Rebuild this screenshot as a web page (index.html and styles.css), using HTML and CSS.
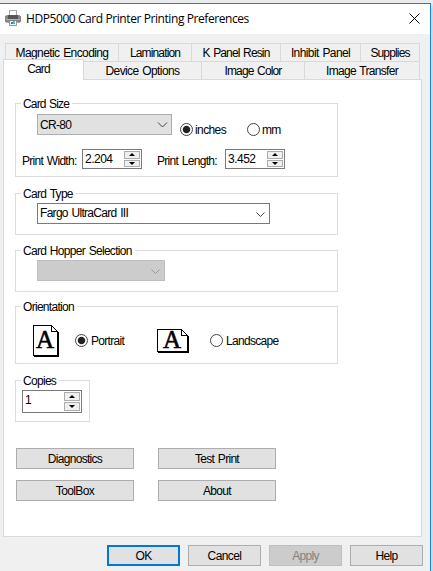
FILE: index.html
```
<!DOCTYPE html>
<html lang="en">
<head>
<meta charset="utf-8">
<title>HDP5000 Card Printer Printing Preferences</title>
<link rel="stylesheet" href="styles.css">
</head>
<body>
<div class="window">
  <header class="titlebar">
    <svg class="printer" width="16" height="16" viewBox="0 0 16 16" shape-rendering="crispEdges">
      <path d="M4.5 6V.5h7V6" fill="#fff" stroke="#a8a8a8"/>
      <path d="M1 5h3v1H1zM12 5h3v1h-3z" fill="#999"/>
      <path d="M0 6h16v6H0z" fill="#858585"/>
      <path d="M3 5h10v4H3z" fill="#555"/>
      <path d="M1 9h14v1H1z" fill="#b5b5b5"/>
      <path d="M1 12h14v1H1z" fill="#aaa"/>
      <path d="M4 11h8v5H4z" fill="#999"/>
      <path d="M5 11h6v4H5z" fill="#eef5fa"/>
      <path d="M6 12h2v2H6z" fill="#2d84b5"/>
      <path d="M8 11h2v3H8z" fill="#59b0d8"/>
    </svg>
    <h1 class="title">HDP5000 Card Printer Printing Preferences</h1>
    <svg class="close" width="11" height="11" viewBox="0 0 11 11"><path d="M.5.5l10 10M10.5.5l-10 10" stroke="#000" fill="none"/></svg>
  </header>

  <nav class="tabs tabs-back">
    <span class="tab w114 loose">Magnetic Encoding</span><span class="tab w74 tight">Lamination</span><span class="tab w90 tight">K Panel Resin</span><span class="tab w81 loose">Inhibit Panel</span><span class="tab w60 tight">Supplies</span>
  </nav>
  <nav class="tabs tabs-front">
    <span class="tab active tight">Card</span><span class="tab w119 loose">Device Options</span><span class="tab w104 tight">Image Color</span><span class="tab w116">Image Transfer</span>
  </nav>

  <main class="page">
    <section class="group size">
      <h2 class="legend tight">Card Size</h2>
      <div class="row size-row">
        <div class="combo gray"><span>CR-80</span><svg class="chev" width="11" height="6" viewBox="0 0 11 6"><path d="M1 .5l4.5 4.5L10 .5"/></svg></div>
        <i class="radio on"></i><span class="rl inches loose">inches</span>
        <i class="radio"></i><span class="rl mm">mm</span>
      </div>
      <div class="row print-row">
        <span class="pw">Print Width:</span>
        <div class="spin"><span>2.204</span><div class="arrows"><b class="up"></b><b class="down"></b></div></div>
        <span class="pl">Print Length:</span>
        <div class="spin"><span>3.452</span><div class="arrows"><b class="up"></b><b class="down"></b></div></div>
      </div>
    </section>

    <section class="group type">
      <h2 class="legend">Card Type</h2>
      <div class="combo white"><span>Fargo UltraCard III</span><svg class="chev" width="9" height="5" viewBox="0 0 9 5"><path d="M.5.5l4 4 4-4"/></svg></div>
    </section>

    <section class="group hopper">
      <h2 class="legend">Card Hopper Selection</h2>
      <div class="combo disabled"><span></span><svg class="chev" width="9" height="5" viewBox="0 0 9 5"><path d="M.5.5l4 4 4-4"/></svg></div>
    </section>

    <section class="group orient">
      <h2 class="legend">Orientation</h2>
      <div class="row orient-row">
        <div class="sheet portrait">
          <svg width="26" height="32" viewBox="0 0 26 32" shape-rendering="crispEdges"><path d="M.5.5h18l6 6v24H.5z" fill="#fff" stroke="#000"/><path d="M18.5.5v6h6" fill="none" stroke="#000"/><path d="M1 30h24V7h1v25H1z"/></svg>
          <span class="letter">A</span>
        </div>
        <i class="radio on"></i><span class="rl por">Portrait</span>
        <div class="sheet landscape">
          <svg width="32" height="24" viewBox="0 0 32 24" shape-rendering="crispEdges"><path d="M.5.5h24l6 6v16H.5z" fill="#fff" stroke="#000"/><path d="M24.5.5v6h6" fill="none" stroke="#000"/><path d="M1 22h29V7h2v17H1z"/></svg>
          <span class="letter">A</span>
        </div>
        <i class="radio"></i><span class="rl lan">Landscape</span>
      </div>
    </section>

    <section class="group copies">
      <h2 class="legend">Copies</h2>
      <div class="spin big"><span>1</span><div class="arrows"><b class="up"></b><b class="down"></b></div></div>
    </section>

    <div class="tools">
      <button class="btn">Diagnostics</button><button class="btn">Test Print</button>
      <button class="btn loose">ToolBox</button><button class="btn">About</button>
    </div>
  </main>

  <footer class="actions">
    <button class="btn default">OK</button><button class="btn loose">Cancel</button><button class="btn" disabled>Apply</button><button class="btn">Help</button>
  </footer>
</div>
</body>
</html>
```
FILE: styles.css
```
* { box-sizing: border-box; }
body {
  margin: 0;
  width: 433px;
  height: 571px;
  padding-top: 3px;
  overflow: hidden;
  background: linear-gradient(#ebebeb 3px, #d6d6d6 8px);
  font: 12px/14px "Liberation Sans", Arial, sans-serif;
  letter-spacing: -0.7px;
  word-spacing: 1px;
  color: #000;
  white-space: nowrap;
}
.window {
  width: 431px;
  height: 568px;
  border-top: 1px solid #1883d7;
  border-right: 1px solid #1883d7;
  background: #f0f0f0;
}
.titlebar {
  display: flex;
  height: 30px;
  padding: 6px 10px 0 5px;
  background: #fff;
}
.title {
  margin: 0 auto 0 5px;
  font: 12px/18px "Open Sans", "Noto Sans", sans-serif;
  letter-spacing: -0.42px;
  word-spacing: 0;
}
.close { margin-top: 3px; }
.tabs { display: flex; }
.tabs-back { margin: 9px 0 0 5px; height: 18px; }
.tabs-front { margin: 0 0 0 3px; height: 18px; }
.tab {
  flex: none;
  height: 19px;
  margin-right: -1px;
  padding-top: 2px;
  border: 1px solid #d9d9d9;
  text-align: center;
}
.w114 { width: 114px; }
.w74 { width: 74px; }
.w90 { width: 90px; }
.w81 { width: 81px; }
.w60 { width: 60px; }
.w119 { width: 119px; }
.w104 { width: 104px; }
.w116 { width: 116px; }
.tab.active {
  position: relative;
  z-index: 1;
  width: 81px;
  height: 21px;
  margin-top: -2px;
  padding: 2px 10px 0 0;
  border-bottom: 0;
  background: #fff;
}
.page {
  width: 419px;
  height: 458px;
  margin-left: 3px;
  padding: 23px 0 0 11px;
  border: 1px solid #d9d9d9;
  background: #fff;
}
.group {
  width: 323px;
  border: 1px solid #dcdcdc;
}
.legend {
  width: max-content;
  margin: -7px 0 0 5px;
  padding: 0 3px 0 2px;
  background: #fff;
  font: inherit;
}
.row { display: flex; }
.size { height: 74px; }
.type { height: 42px; margin-top: 16px; }
.hopper { height: 42px; margin-top: 15px; }
.orient { height: 58px; margin-top: 14px; }
.copies { width: 75px; height: 42px; margin-top: 16px; }
.combo {
  display: flex;
  height: 21px;
  margin-left: 21px;
  padding: 2px 3px 0 2px;
  border: 1px solid #adadad;
}
.chev { margin: 6px 1px 0 auto; fill: none; stroke: #444; }
.gray { width: 135px; padding-top: 3px; background: #e1e1e1; }
.gray .chev { margin: 4px 0 0 auto; }
.white { width: 233px; margin-top: 2px; border-color: #7a7a7a; }
.disabled { width: 128px; margin-top: 2px; background: #ccc; border-color: #bfbfbf; }
.disabled .chev { margin-top: 6px; stroke: #999; }
.size-row { margin-top: 3px; }
.radio {
  flex: none;
  width: 13px;
  height: 13px;
  border: 1px solid #444;
  border-radius: 50%;
  background: #fff;
}
.radio.on { background: radial-gradient(circle, #222 3.2px, #fff 4.2px); }
.size-row .radio { margin: 9px 2px 0 8px; }
.rl { margin-top: 9px; }
.inches { width: 44px; }
.print-row { margin: 12px 0 0 6px; }
.pw { width: 60px; padding-top: 5px; }
.pl { width: 68px; margin-left: 15px; padding-top: 5px; }
.spin {
  display: flex;
  justify-content: space-between;
  width: 60px;
  height: 20px;
  padding: 2px 1px 1px 2px;
  border: 1px solid #7a7a7a;
  letter-spacing: -0.5px;
}
.arrows {
  display: grid;
  width: 16px;
  margin-top: -1px;
  gap: 1px;
}
.arrows b {
  display: flex;
  align-items: center;
  justify-content: center;
  border: 1px solid #acacac;
  background: #f0f0f0;
}
.arrows b::before {
  content: "";
  border: 3px solid transparent;
  border-width: 0 3px 3px;
  border-bottom-color: #000;
}
.arrows .down::before {
  border-width: 3px 3px 0;
  border-top-color: #000;
}
.orient-row { padding-left: 17px; }
.sheet { position: relative; }
.portrait { margin-top: 11px; width: 42px; }
.landscape { margin-top: 15px; width: 53px; }
.letter {
  position: absolute;
  left: 3px;
  font: 25px/24px "Liberation Serif", serif;
  letter-spacing: 0;
  -webkit-text-stroke: 0.6px #000;
}
.portrait .letter { top: 3px; }
.landscape .letter { top: -1px; left: 6px; }
.orient-row .radio { margin: 20px 3px 0 0; }
.orient-row .rl { margin-top: 20px; }
.por { width: 66px; }
.spin.big { width: 60px; height: 23px; margin: 2px 0 0 6px; }
.tools {
  display: grid;
  grid-template-columns: 118px 118px;
  gap: 11px 24px;
  margin: 26px 0 0 1px;
}
.btn {
  height: 21px;
  padding: 0;
  border: 1px solid #adadad;
  background: #e1e1e1;
  color: #000;
  font: inherit;
  letter-spacing: -0.7px;
  word-spacing: 1px;
}
.actions {
  display: flex;
  gap: 8px;
  margin: 8px 0 0 107px;
}
.actions .btn { width: 73px; }
.actions .default { border: 2px solid #0078d7; }
.btn:disabled { background: #ccc; border-color: #bfbfbf; color: #838383; }
.loose { letter-spacing: -0.6px; }
.tight { letter-spacing: -0.85px; }
```
